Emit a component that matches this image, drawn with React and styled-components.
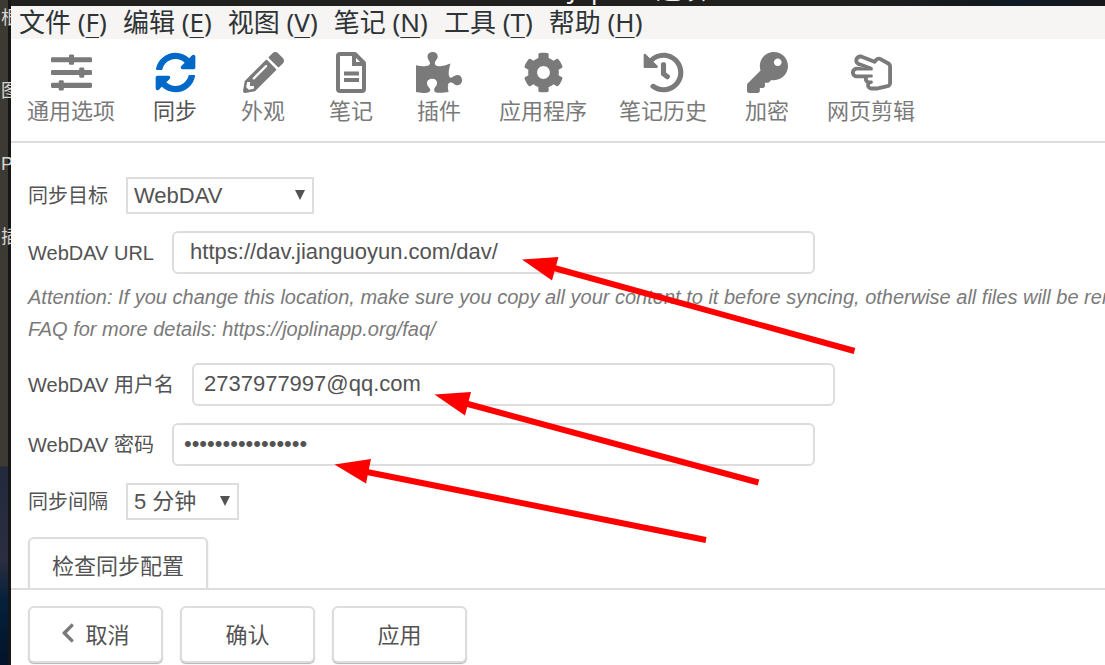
import React, { useState } from "react";
import styled, { createGlobalStyle } from "styled-components";
import {
  FaSlidersH,
  FaSyncAlt,
  FaPencilAlt,
  FaPuzzlePiece,
  FaCog,
  FaHistory,
  FaKey,
  FaRegHandScissors,
  FaChevronLeft,
} from "react-icons/fa";

const GlobalStyle = createGlobalStyle`
  *, *::before, *::after { box-sizing: border-box; }
  html, body { margin: 0; }
  body {
    background: #1a1919;
    color: #535353;
    font-family: "Liberation Sans", "Noto Sans CJK SC", sans-serif;
    overflow: hidden;
  }
  button, input, select { font: inherit; color: inherit; }
`;

const Desktop = styled.div`
  position: relative;
  display: flex;
  height: 100vh;
`;

const Backdrop = styled.div`
  flex: 0 0 11px;
  display: flex;
  flex-direction: column;
  overflow: hidden;
  background: linear-gradient(90deg, transparent 8px, #171616 8px),
    linear-gradient(#3d3a34 0 466px, #222a3d 467px, #2b2d40 560px, #05213a 600px, #02132b 100%);
`;

const BackdropItem = styled.span`
  height: 73px;
  padding-left: 1px;
  color: #d8d6d2;
  font-size: 18px;
  line-height: 36px;
  white-space: nowrap;
`;

const Window = styled.div`
  flex: 1;
  min-width: 0;
  display: flex;
  flex-direction: column;
`;

const TitleBar = styled.div`
  flex: 0 0 6px;
  display: flex;
  align-items: flex-end;
  overflow: hidden;
  padding-left: 51%;
  background: linear-gradient(90deg, #20201e 75%, #15191d 88%, #0e1a26 92%, #17171a);
  color: #f2f2f2;
  font: 25px/34px "Noto Sans", "Noto Sans CJK SC", sans-serif;
  white-space: nowrap;
`;

const MenuBar = styled.nav`
  flex: 0 0 33px;
  display: flex;
  gap: 16px;
  padding-left: 8px;
  background: #f6f5f4;
`;

const MenuButton = styled.button`
  padding: 0;
  border: 0;
  background: none;
  color: #2e3436;
  font: 26px/33px "Noto Sans", "Noto Sans CJK SC", sans-serif;
  white-space: nowrap;

  u {
    text-decoration-thickness: 1px;
    text-underline-offset: 5px;
  }
`;

const Toolbar = styled.div`
  flex: 0 0 104px;
  display: flex;
  border-bottom: 2px solid #dddddd;
  background: #ffffff;
`;

const Tab = styled.button`
  display: flex;
  flex-direction: column;
  align-items: center;
  gap: 3px;
  min-width: ${(p) => (p.$wide ? 120 : 88)}px;
  padding: 13px 0 0;
  border: 0;
  background: none;
  color: ${(p) => (p.$active ? "#535353" : "#7a7a7a")};
  font-size: 22px;
  line-height: 32px;

  svg {
    flex: none;
    width: ${(p) => p.$iconWidth}px;
    height: 41px;
    color: ${(p) => (p.$active ? "#0069c8" : "#7a7a7a")};
  }
`;

const Form = styled.form`
  flex: 1;
  min-height: 0;
  display: flex;
  flex-direction: column;
  align-items: flex-start;
  gap: 17px;
  padding: 34px 0 0 17px;
  overflow: hidden;
  background: #ffffff;
`;

const Row = styled.div`
  flex: none;
  display: flex;
  align-items: center;
  gap: 18px;
`;

const Label = styled.label`
  font-size: 20px;
  line-height: 30px;
  white-space: nowrap;
`;

const Field = styled.div`
  flex: none;
  display: flex;
  flex-direction: column;
  gap: 7px;
  padding-bottom: 1px;
`;

const TextInput = styled.input`
  width: 643px;
  height: 43px;
  padding: 0 10px 2px;
  border: 2px solid #dddddd;
  border-radius: 6px;
  background: #ffffff;
  font-size: 22px;
  outline: none;
`;

const Description = styled.p`
  margin: 0;
  color: #7a7a7a;
  font-size: 20px;
  font-style: italic;
  line-height: 32px;
  white-space: nowrap;
`;

const SelectBox = styled.div`
  position: relative;
  width: ${(p) => p.$width}px;

  svg {
    position: absolute;
    top: 13px;
    right: 9px;
    pointer-events: none;
  }
`;

const Select = styled.select`
  display: block;
  width: 100%;
  height: 37px;
  padding: 0 6px;
  border: 2px solid #dddddd;
  border-radius: 0;
  appearance: none;
  background: #ffffff;
  font-size: 22px;
  outline: none;
`;

const Button = styled.button`
  flex: none;
  display: flex;
  align-items: center;
  justify-content: center;
  gap: 10px;
  min-width: 135px;
  height: 57px;
  padding: 0 22px 4px;
  border: 2px solid #dddddd;
  border-radius: 6px;
  background: #ffffff;
  box-shadow: 0 1px 1px rgba(0, 0, 0, 0.3);
  font-size: 22px;
  white-space: nowrap;

  svg {
    width: 14px;
    height: 22px;
    color: #7a7a7a;
  }
`;

const Footer = styled.footer`
  flex: 0 0 77px;
  display: flex;
  align-items: flex-start;
  gap: 17px;
  padding: 16px 17px 0;
  border-top: 2px solid #dddddd;
  background: #ffffff;
`;

const Annotations = styled.svg`
  position: absolute;
  top: 0;
  left: 0;
  pointer-events: none;
`;

const NoteIcon = () => (
  <svg viewBox="0 0 30 41" fill="none" aria-hidden="true">
    <path d="M4 2H19L28 11V37Q28 39 26 39H4Q2 39 2 37V4Q2 2 4 2Z" stroke="currentColor" strokeWidth="4" strokeLinejoin="round" />
    <path d="M18 3V12H28" stroke="currentColor" strokeWidth="4" />
    <path d="M8 21.5H23M8 28H23" stroke="currentColor" strokeWidth="4" />
  </svg>
);

const menus = [
  ["文件", "F"],
  ["编辑", "E"],
  ["视图", "V"],
  ["笔记", "N"],
  ["工具", "T"],
  ["帮助", "H"],
];

const tabs = [
  ["通用选项", FaSlidersH, 41],
  ["同步", FaSyncAlt, 41],
  ["外观", FaPencilAlt, 41],
  ["笔记", NoteIcon, 30],
  ["插件", FaPuzzlePiece, 46],
  ["应用程序", FaCog, 41],
  ["笔记历史", FaHistory, 41],
  ["加密", FaKey, 41],
  ["网页剪辑", FaRegHandScissors, 41],
];

const arrows = [
  { head: "522,259.5 558.5,257 552,280.5", line: [554, 268, 854.5, 351] },
  { head: "434.5,394.5 471,392 465,415.5", line: [466, 403.5, 758.5, 482.5] },
  { head: "334.5,464.5 371,459 366,483.5", line: [367, 472, 706, 540] },
];

function SelectField({ id, label, width, options }) {
  return (
    <Row>
      <Label htmlFor={id}>{label}</Label>
      <SelectBox $width={width}>
        <Select id={id}>
          {options.map((o) => (
            <option key={o}>{o}</option>
          ))}
        </Select>
        <svg width="10" height="10" aria-hidden="true">
          <path d="M0 0H10L5 10Z" fill="#535353" />
        </svg>
      </SelectBox>
    </Row>
  );
}

function TextField({ id, label, type = "text", initial }) {
  const [value, setValue] = useState(initial);
  return (
    <Row>
      <Label htmlFor={id}>{label}</Label>
      <TextInput id={id} type={type} value={value} onChange={(e) => setValue(e.target.value)} />
    </Row>
  );
}

export default function App() {
  const [active, setActive] = useState("同步");
  return (
    <Desktop>
      <GlobalStyle />
      <Backdrop>
        <BackdropItem>根</BackdropItem>
        <BackdropItem>图</BackdropItem>
        <BackdropItem>P</BackdropItem>
        <BackdropItem>插</BackdropItem>
      </Backdrop>
      <Window>
        <TitleBar>Joplin - 选项</TitleBar>
        <MenuBar>
          {menus.map(([name, key]) => (
            <MenuButton key={key} type="button">
              {name} (<u>{key}</u>)
            </MenuButton>
          ))}
        </MenuBar>
        <Toolbar>
          {tabs.map(([name, Icon, iconWidth]) => (
            <Tab
              key={name}
              type="button"
              $wide={name.length > 2}
              $iconWidth={iconWidth}
              $active={name === active}
              onClick={() => setActive(name)}
            >
              <Icon />
              {name}
            </Tab>
          ))}
        </Toolbar>
        <Form onSubmit={(e) => e.preventDefault()}>
          <SelectField id="target" label="同步目标" width={188} options={["WebDAV"]} />
          <Field>
            <TextField id="url" label="WebDAV URL" initial=" https://dav.jianguoyun.com/dav/" />
            <Description>
              Attention: If you change this location, make sure you copy all your content to it before syncing,
              otherwise all files will be removed! See the
              <br />
              FAQ for more details: https://joplinapp.org/faq/
            </Description>
          </Field>
          <TextField id="user" label="WebDAV 用户名" initial="2737977997@qq.com" />
          <TextField id="password" label="WebDAV 密码" type="password" initial="abcdefghijklmnop" />
          <SelectField id="interval" label="同步间隔" width={113} options={["5 分钟"]} />
          <Button type="button">检查同步配置</Button>
        </Form>
        <Footer>
          <Button type="button">
            <FaChevronLeft />
            取消
          </Button>
          <Button type="button">确认</Button>
          <Button type="button">应用</Button>
        </Footer>
      </Window>
      <Annotations width="860" height="560" aria-hidden="true">
        {arrows.map(({ head, line: [x1, y1, x2, y2] }) => (
          <g key={head} fill="#ff0000" stroke="#ff0000">
            <polygon points={head} stroke="none" />
            <line x1={x1} y1={y1} x2={x2} y2={y2} strokeWidth="6" />
          </g>
        ))}
      </Annotations>
    </Desktop>
  );
}
